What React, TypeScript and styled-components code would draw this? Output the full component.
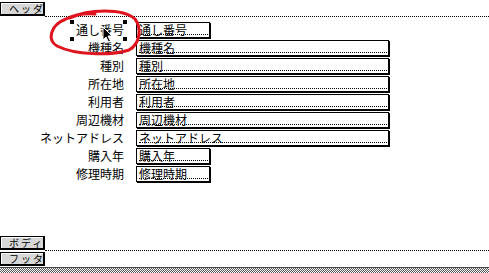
import React from 'react';
import styled, { createGlobalStyle } from 'styled-components';

const GlobalStyle = createGlobalStyle`
  html, body {
    margin: 0;
    padding: 0;
    background: #fff;
  }
  body {
    font-family: "Noto Sans CJK JP", "DejaVu Sans", sans-serif;
    color: #000;
  }
`;

const Page = styled.div`
  position: relative;
  width: 489px;
  height: 273px;
  display: flex;
  flex-direction: column;
  overflow: hidden;
  background: #fff;
`;

const BandBar = styled.div<{ $height: number; $top: number }>`
  flex: 0 0 ${(p) => p.$height}px;
  display: flex;
  align-items: flex-start;
  padding-top: ${(p) => p.$top}px;
  box-sizing: border-box;
`;

const BandButton = styled.div`
  width: 45px;
  height: 14px;
  box-sizing: border-box;
  background: #d8d8d8;
  border: 1px solid #000;
  border-right-width: 2px;
  border-bottom-width: 2px;
  box-shadow: inset 1px 1px 0 #fff;
  font-size: 10px;
  line-height: 11px;
  padding-left: 8px;
  letter-spacing: 2px;
  white-space: nowrap;
`;

const Rule = styled.div`
  flex: 1;
  align-self: flex-end;
  height: 0;
  border-bottom: 1px dotted #000;
`;

const SectionArea = styled.div`
  flex: 0 0 219px;
  box-sizing: border-box;
  padding-top: 5px;
`;

const Form = styled.div`
  display: grid;
  grid-template-columns: 136px auto;
  grid-auto-rows: 17px;
  row-gap: 1px;
`;

const LabelCell = styled.div`
  display: flex;
  justify-content: flex-end;
  padding-right: 11px;
`;

const LabelText = styled.span`
  position: relative;
  height: 17px;
  box-sizing: border-box;
  padding: 1px 1px 0 4px;
  font-size: 12px;
  line-height: 13px;
  white-space: nowrap;
`;

const Handle = styled.i<{ $x: 'l' | 'r'; $y: 't' | 'b' }>`
  position: absolute;
  width: 4px;
  height: 4px;
  background: #000;
  ${(p) => (p.$x === 'l' ? 'left: -2px;' : 'right: -2px;')}
  ${(p) => (p.$y === 't' ? 'top: -2px;' : 'bottom: -2px;')}
`;

const FieldBox = styled.div<{ $width: number }>`
  width: ${(p) => p.$width}px;
  height: 16px;
  box-sizing: border-box;
  border: 1px solid #000;
  box-shadow: 1px 1px 0 #000;
  padding: 0 1px 0 2px;
  background: #fff;
`;

const FieldText = styled.div`
  height: 11px;
  border-bottom: 1px dotted #000;
  font-size: 12px;
  line-height: 13px;
  white-space: nowrap;
  overflow: visible;
`;

const FooterPattern = styled.div`
  flex: 1;
  border-top: 1px solid #444;
  background: repeating-conic-gradient(#555 0 25%, #fff 0 50%) 0 0 / 2px 2px;
`;

const Overlay = styled.svg`
  position: absolute;
  left: 0;
  top: 0;
  pointer-events: none;
`;

type Field = { label: string; short?: boolean; selected?: boolean };

const fields: Field[] = [
  { label: '通し番号', short: true, selected: true },
  { label: '機種名' },
  { label: '種別' },
  { label: '所在地' },
  { label: '利用者' },
  { label: '周辺機材' },
  { label: 'ネットアドレス' },
  { label: '購入年', short: true },
  { label: '修理時期', short: true },
];

const App = () => {
  return (
    <>
      <GlobalStyle />
      <Page>
        <BandBar $height={17} $top={2}>
          <BandButton>ヘッダ</BandButton>
          <Rule />
        </BandBar>
        <SectionArea>
          <Form>
            {fields.map((f) => (
              <React.Fragment key={f.label}>
                <LabelCell>
                  <LabelText>
                    {f.label}
                    {f.selected && (
                      <>
                        <Handle $x="l" $y="t" />
                        <Handle $x="r" $y="t" />
                        <Handle $x="l" $y="b" />
                        <Handle $x="r" $y="b" />
                      </>
                    )}
                  </LabelText>
                </LabelCell>
                <FieldBox $width={f.short ? 74 : 253}>
                  <FieldText>{f.label}</FieldText>
                </FieldBox>
              </React.Fragment>
            ))}
          </Form>
        </SectionArea>
        <BandBar $height={15} $top={0}>
          <BandButton>ボディ</BandButton>
          <Rule />
        </BandBar>
        <BandBar $height={16} $top={1}>
          <BandButton>フッタ</BandButton>
        </BandBar>
        <FooterPattern />
        <Overlay width={489} height={273} viewBox="0 0 489 273">
          <path
            d="M70 18 C88 9 123 8 135 19 C142 28 140 44 129 50 C110 56 75 55 57 46 C47 40 50 25 66 19 C74 15 84 13 95 14"
            fill="none"
            stroke="#e0141e"
            strokeWidth={3}
            strokeLinecap="round"
          />
          <path
            d="M103 27 L103 40 L106 37 L108.5 42 L110.5 41 L108 36 L112 36 Z"
            fill="#000"
            stroke="#fff"
            strokeWidth={1}
          />
        </Overlay>
      </Page>
    </>
  );
};

export default App;
